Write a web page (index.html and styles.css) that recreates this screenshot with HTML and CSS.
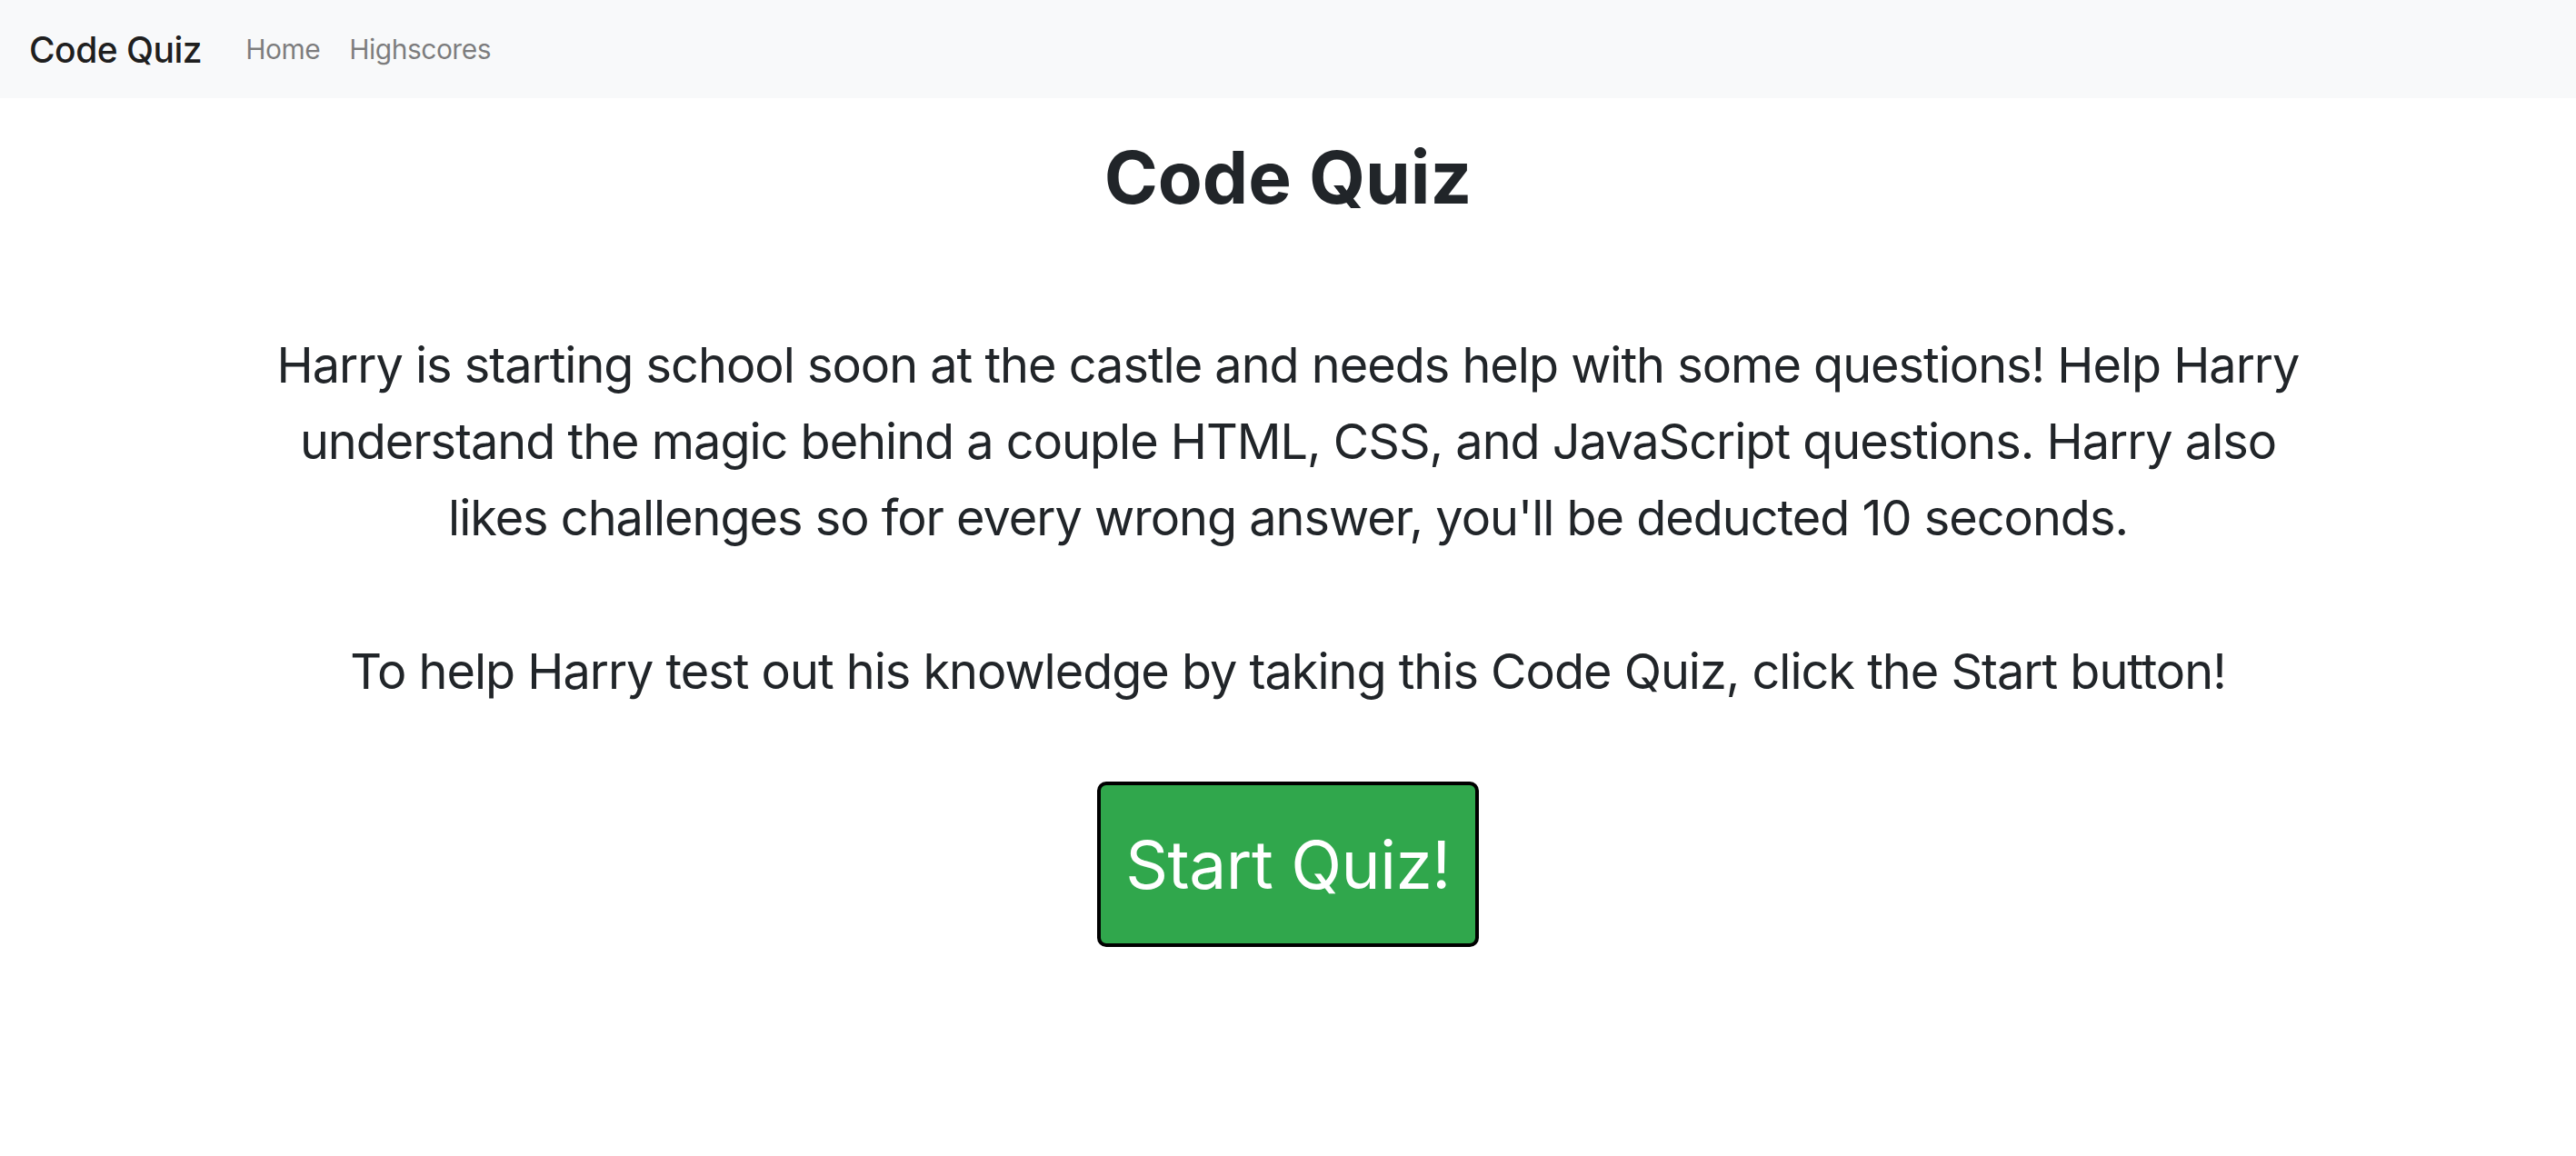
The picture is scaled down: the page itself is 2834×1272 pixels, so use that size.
FILE: index.html
```html
<!DOCTYPE html>
<html lang="en">
<head>
<meta charset="utf-8">
<title>Code Quiz</title>
<link rel="stylesheet" href="styles.css">
</head>
<body>
<nav class="navbar">
  <a class="brand" href="#">Code Quiz</a>
  <ul class="nav-links">
    <li><a href="#">Home</a></li>
    <li><a href="#">Highscores</a></li>
  </ul>
</nav>
<main class="container">
  <h1 class="title">Code Quiz</h1>
  <p class="intro">Harry is starting school soon at the castle and needs help with some questions! Help Harry understand the magic behind a couple HTML, CSS, and JavaScript questions. Harry also likes challenges so for every wrong answer, you'll be deducted 10 seconds.</p>
  <p class="intro second">To help Harry test out his knowledge by taking this Code Quiz, click the Start button!</p>
  <button class="start-btn" type="button">Start Quiz!</button>
</main>
</body>
</html>
```

FILE: styles.css
```css
* { box-sizing: border-box; }
html, body {
  margin: 0;
  padding: 0;
  background: #fff;
}
body {
  font-family: Inter, "Noto Sans", sans-serif;
  color: #212529;
}
.navbar {
  display: flex;
  align-items: center;
  height: 108px;
  padding: 0 32px;
  background: #f8f9fa;
}
.brand {
  font-size: 39px;
  font-weight: 500;
  letter-spacing: -0.5px;
  color: rgba(0, 0, 0, 0.9);
  text-decoration: none;
  margin-right: 32px;
}
.nav-links {
  display: flex;
  list-style: none;
  margin: 0;
  padding: 0;
}
.nav-links a {
  display: block;
  padding: 0 16px;
  font-size: 30px;
  letter-spacing: -0.5px;
  color: rgba(0, 0, 0, 0.5);
  text-decoration: none;
}
.container {
  max-width: 2320px;
  margin: 0 auto;
  padding: 39px 30px 0;
  display: flex;
  flex-direction: column;
  align-items: center;
  text-align: center;
}
.title {
  margin: 0;
  font-size: 80px;
  font-weight: 700;
  line-height: 1.2;
}
.intro {
  margin: 117px 0 0;
  font-size: 54px;
  letter-spacing: -1px;
  line-height: 84px;
}
.intro.second {
  margin-top: 85px;
}
.start-btn {
  margin-top: 79px;
  width: 420px;
  height: 182px;
  background: #30a74c;
  border: 4px solid #000;
  border-radius: 10px;
  color: #fff;
  font-family: Inter, "Noto Sans", sans-serif;
  font-size: 73px;
  letter-spacing: -0.5px;
  line-height: 1;
  padding: 0;
}
```
